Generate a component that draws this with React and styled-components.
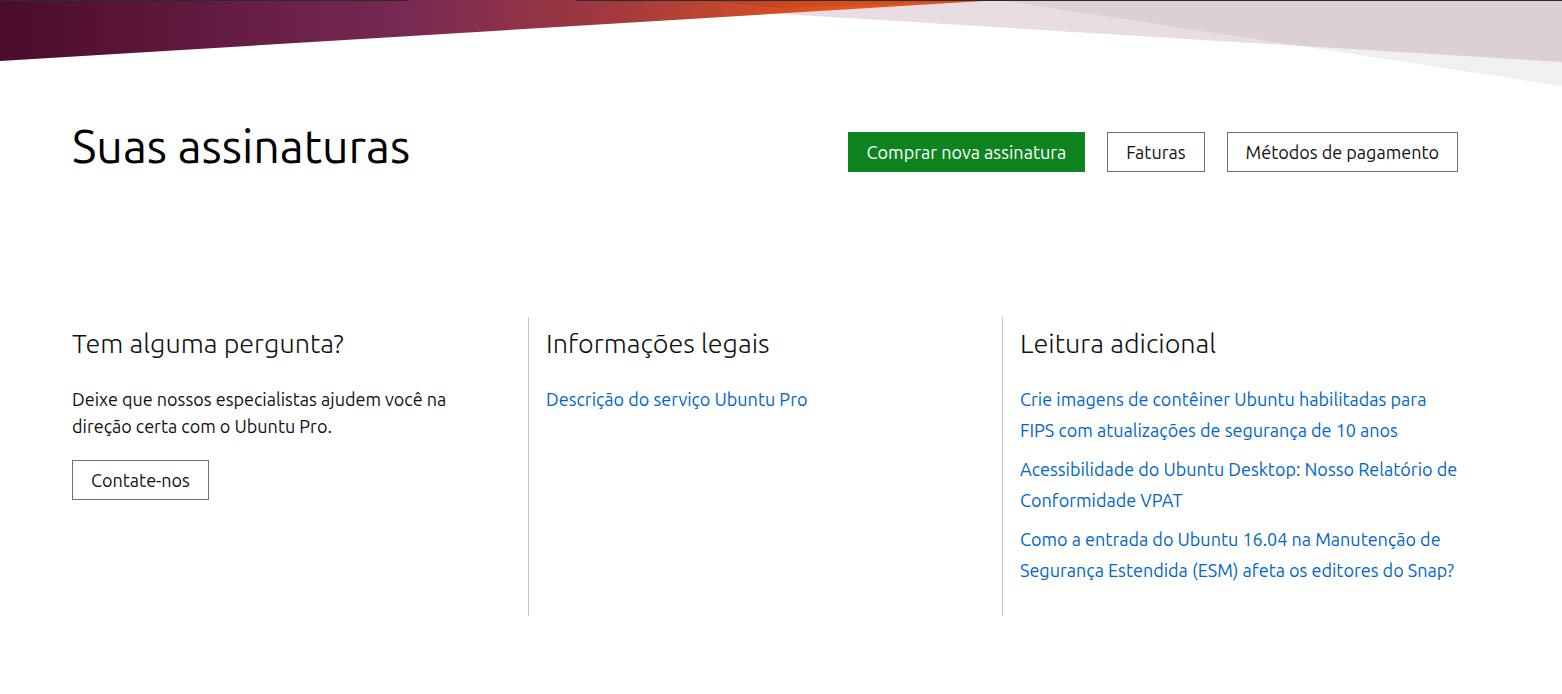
import styled, { createGlobalStyle } from "styled-components";

const GlobalStyle = createGlobalStyle`
  body {
    margin: 0;
    background: #fff;
    font-family: "Ubuntu", "Open Sans", "Noto Sans", sans-serif;
    color: #111;
  }
`;

const StyledBanner = styled.svg`
  display: block;
  width: 100%;
  height: 86px;
`;

const StyledPage = styled.main`
  width: 1386px;
  margin-left: 72px;
`;

const StyledHeader = styled.header`
  margin-top: 32px;
  display: flex;
  justify-content: space-between;
  align-items: flex-start;
`;

const StyledTitle = styled.h1`
  margin: 0;
  font-size: 46.5px;
  line-height: 56px;
  font-weight: 400;
  color: #000;
`;

const StyledActions = styled.div`
  margin-top: 14px;
  display: flex;
  gap: 22px;
`;

const StyledButton = styled.button`
  height: 40px;
  padding: 0 18px;
  font-family: inherit;
  font-size: 18px;
  border: 1px solid ${({ $primary }) => ($primary ? "#0e8420" : "#707070")};
  background-color: ${({ $primary }) => ($primary ? "#0e8420" : "#fff")};
  color: ${({ $primary }) => ($primary ? "#fff" : "#111")};
  cursor: pointer;
`;

const StyledColumns = styled.section`
  margin: 143px -18px 0;
  display: grid;
  grid-template-columns: repeat(3, 1fr);
`;

const StyledColumn = styled.div`
  min-height: 290px;
  padding: 9px 0 0 ${({ $divided }) => ($divided ? "17px" : "18px")};
  border-left: ${({ $divided }) => ($divided ? "1px solid #c4c4c4" : "none")};
`;

const StyledColumnTitle = styled.h3`
  margin: -1px 0 25px;
  font-size: 27px;
  line-height: 36px;
  font-weight: 300;
  color: #111;
`;

const StyledText = styled.p`
  margin: 0 0 20px;
  font-size: 18px;
  line-height: 27px;
`;

const StyledLinkList = styled.ul`
  margin: -2px 0 0;
  padding: 0;
  list-style: none;
  display: flex;
  flex-direction: column;
  gap: 8px;
`;

const StyledLink = styled.a`
  font-size: 18px;
  line-height: 31px;
  color: #0066cc;
  text-decoration: none;
`;

function Banner() {
  return (
    <StyledBanner viewBox="0 0 1562 86" preserveAspectRatio="none">
      <defs>
        <linearGradient id="aubergine" x1="0" y1="0" x2="1000" y2="0" gradientUnits="userSpaceOnUse">
          <stop offset="0" stopColor="#4b0b2b" />
          <stop offset="0.4" stopColor="#772953" />
          <stop offset="0.62" stopColor="#a33a3e" />
          <stop offset="0.82" stopColor="#e1521f" />
          <stop offset="1" stopColor="#e95420" />
        </linearGradient>
      </defs>
      <polygon points="999,0 1562,0 1562,86" fill="#f0f0f0" />
      <polygon points="553,0 1562,0 1562,62" fill="#772953" fillOpacity="0.16" />
      <polygon points="0,0 1000,0 0,61" fill="url(#aubergine)" />
      <polygon points="700,0 1000,0 780,8" fill="#000" fillOpacity="0.07" />
      <rect x="0" y="0" width="409" height="1" fill="#2c2c2c" />
      <rect x="576" y="0" width="986" height="1" fill="#2c2c2c" />
    </StyledBanner>
  );
}

function App() {
  return (
    <>
      <GlobalStyle />
      <Banner />
      <StyledPage>
        <StyledHeader>
          <StyledTitle>Suas assinaturas</StyledTitle>
          <StyledActions>
            <StyledButton $primary>Comprar nova assinatura</StyledButton>
            <StyledButton>Faturas</StyledButton>
            <StyledButton>Métodos de pagamento</StyledButton>
          </StyledActions>
        </StyledHeader>

        <StyledColumns>
          <StyledColumn>
            <StyledColumnTitle>Tem alguma pergunta?</StyledColumnTitle>
            <StyledText>
              Deixe que nossos especialistas ajudem você na
              <br />
              direção certa com o Ubuntu Pro.
            </StyledText>
            <StyledButton>Contate-nos</StyledButton>
          </StyledColumn>

          <StyledColumn $divided>
            <StyledColumnTitle>Informações legais</StyledColumnTitle>
            <StyledLinkList>
              <li>
                <StyledLink href="#">Descrição do serviço Ubuntu Pro</StyledLink>
              </li>
            </StyledLinkList>
          </StyledColumn>

          <StyledColumn $divided>
            <StyledColumnTitle>Leitura adicional</StyledColumnTitle>
            <StyledLinkList>
              <li>
                <StyledLink href="#">
                  Crie imagens de contêiner Ubuntu habilitadas para
                  <br />
                  FIPS com atualizações de segurança de 10 anos
                </StyledLink>
              </li>
              <li>
                <StyledLink href="#">
                  Acessibilidade do Ubuntu Desktop: Nosso Relatório de
                  <br />
                  Conformidade VPAT
                </StyledLink>
              </li>
              <li>
                <StyledLink href="#">
                  Como a entrada do Ubuntu 16.04 na Manutenção de
                  <br />
                  Segurança Estendida (ESM) afeta os editores do Snap?
                </StyledLink>
              </li>
            </StyledLinkList>
          </StyledColumn>
        </StyledColumns>
      </StyledPage>
    </>
  );
}

export default App;
